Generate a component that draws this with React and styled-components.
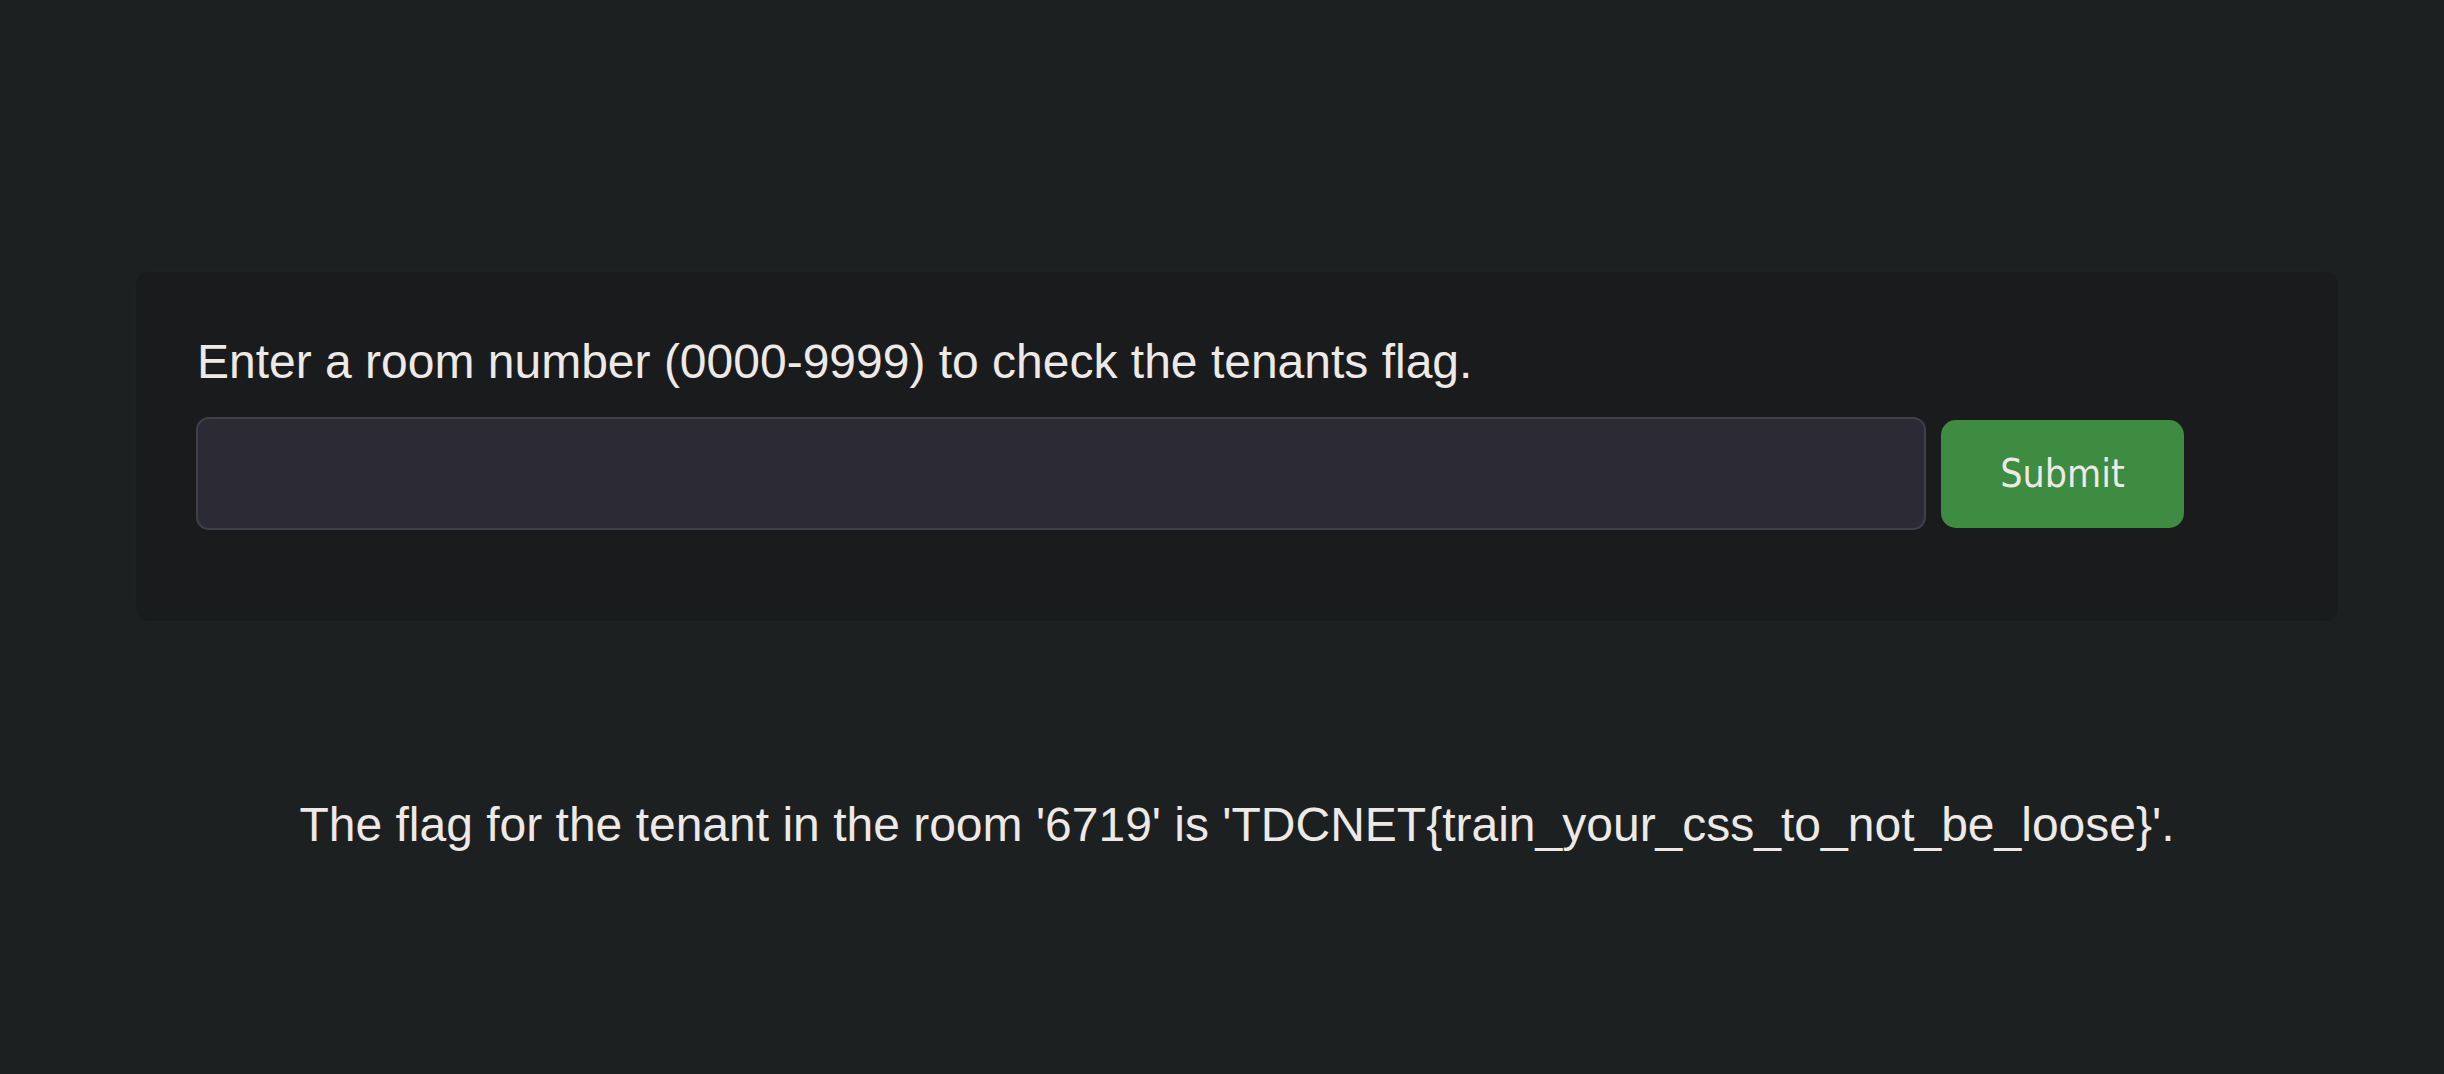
import React from "react";
import styled, { createGlobalStyle } from "styled-components";

const Global = createGlobalStyle`
  html, body {
    margin: 0;
    padding: 0;
    background: #1d2021;
  }
  body {
    font-family: "Liberation Sans", Arial, sans-serif;
    color: #ece9e6;
  }
`;

const Page = styled.main`
  min-height: 1074px;
  box-sizing: border-box;
  padding: 272px 106px 0 136px;
  display: flex;
  flex-direction: column;
`;

const Card = styled.section`
  background: #1a1b1d;
  border-radius: 12px;
  box-shadow: 0 0 18px 6px rgba(255, 255, 255, 0.012);
  padding: 62px 60px 91px;
  display: flex;
  flex-direction: column;
  gap: 28px;
`;

const Label = styled.label`
  font-size: 48px;
  line-height: 55px;
  margin-left: 1px;
`;

const Row = styled.form`
  display: flex;
  align-items: center;
  gap: 15px;
  margin: 0;
`;

const Input = styled.input`
  flex: 0 0 1730px;
  height: 113px;
  box-sizing: border-box;
  background: #2b2a35;
  border: 2px solid #404048;
  border-radius: 13px;
  outline: none;
  color: #ece9e6;
  font-size: 40px;
  padding: 0 20px;
`;

const Button = styled.button`
  width: 243px;
  height: 108px;
  border: none;
  border-radius: 15px;
  background: #3e8c41;
  color: #ece9e6;
  font-family: "DejaVu Sans Condensed", "DejaVu Sans", sans-serif;
  font-stretch: condensed;
  font-size: 39px;
  cursor: pointer;
  padding: 0;
`;

const Result = styled.p`
  margin: 176px 0 0;
  text-align: center;
  font-size: 48px;
  line-height: 55px;
`;

export default function App() {
  return (
    <>
      <Global />
      <Page>
        <Card>
          <Label htmlFor="room">Enter a room number (0000-9999) to check the tenants flag.</Label>
          <Row onSubmit={(e) => e.preventDefault()}>
            <Input id="room" type="text" />
            <Button type="submit">Submit</Button>
          </Row>
        </Card>
        <Result>
          The flag for the tenant in the room '6719' is 'TDCNET{"{"}train_your_css_to_not_be_loose{"}"}'.
        </Result>
      </Page>
    </>
  );
}
